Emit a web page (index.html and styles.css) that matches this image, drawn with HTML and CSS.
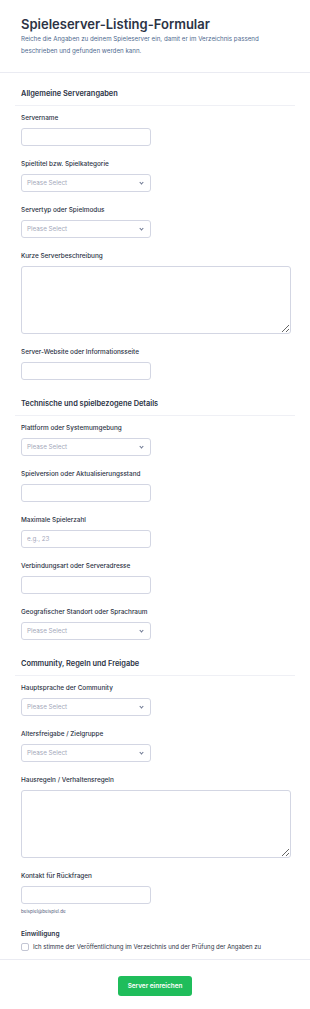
FILE: index.html
```html
<!DOCTYPE html>
<html lang="de">
<head>
  <meta charset="UTF-8">
  <meta name="viewport" content="width=device-width, initial-scale=1.0">
  <title>Spieleserver-Listing-Formular</title>
  <link rel="stylesheet" href="styles.css">
</head>
<body>
  <form class="form">
    <header class="form-header">
      <h1>Spieleserver-Listing-Formular</h1>
      <p>Reiche die Angaben zu deinem Spieleserver ein, damit er im Verzeichnis passend beschrieben und gefunden werden kann.</p>
    </header>

    <section class="section">
      <h2>Allgemeine Serverangaben</h2>
      <div class="field">
        <label>Servername</label>
        <input type="text" class="input">
      </div>
      <div class="field">
        <label>Spieltitel bzw. Spielkategorie</label>
        <div class="select">Please Select</div>
      </div>
      <div class="field">
        <label>Servertyp oder Spielmodus</label>
        <div class="select">Please Select</div>
      </div>
      <div class="field">
        <label>Kurze Serverbeschreibung</label>
        <textarea class="textarea"></textarea>
      </div>
      <div class="field">
        <label>Server-Website oder Informationsseite</label>
        <input type="text" class="input">
      </div>
    </section>

    <section class="section">
      <h2>Technische und spielbezogene Details</h2>
      <div class="field">
        <label>Plattform oder Systemumgebung</label>
        <div class="select">Please Select</div>
      </div>
      <div class="field">
        <label>Spielversion oder Aktualisierungsstand</label>
        <input type="text" class="input">
      </div>
      <div class="field">
        <label>Maximale Spielerzahl</label>
        <input type="text" class="input" placeholder="e.g., 23">
      </div>
      <div class="field">
        <label>Verbindungsart oder Serveradresse</label>
        <input type="text" class="input">
      </div>
      <div class="field">
        <label>Geografischer Standort oder Sprachraum</label>
        <div class="select">Please Select</div>
      </div>
    </section>

    <section class="section">
      <h2>Community, Regeln und Freigabe</h2>
      <div class="field">
        <label>Hauptsprache der Community</label>
        <div class="select">Please Select</div>
      </div>
      <div class="field">
        <label>Altersfreigabe / Zielgruppe</label>
        <div class="select">Please Select</div>
      </div>
      <div class="field">
        <label>Hausregeln / Verhaltensregeln</label>
        <textarea class="textarea"></textarea>
      </div>
      <div class="field">
        <label>Kontakt für Rückfragen</label>
        <input type="text" class="input">
        <span class="hint">beispiel@beispiel.de</span>
      </div>
      <div class="field consent">
        <label class="consent-title">Einwilligung</label>
        <label class="check">
          <span class="box"></span>
          Ich stimme der Veröffentlichung im Verzeichnis und der Prüfung der Angaben zu
        </label>
      </div>
    </section>

    <footer class="form-footer">
      <button type="button" class="submit">Server einreichen</button>
    </footer>
  </form>
</body>
</html>
```

FILE: styles.css
```css
body {
  margin: 0;
  background-color: #fff;
  color: #2c3345;
  font-family: Inter, 'Noto Sans', sans-serif;
}

.form {
  width: 310px;
}

.form-header {
  padding: 16px 21px 15px;
  margin-bottom: 10px;
  border-bottom: 1px solid #eaebf2;
}

.form-header h1 {
  margin: 0;
  font-size: 13px;
  line-height: 17px;
  font-weight: 600;
}

.form-header p {
  margin: 0;
  font-size: 6.2px;
  line-height: 12px;
  color: #4f6a8f;
}

.section {
  padding: 5px 15px 0;
}

.section h2 {
  margin: 0 0 7px;
  padding: 0 6px 5px;
  font-size: 7.4px;
  line-height: 12px;
  font-weight: 600;
  border-bottom: 1px solid #eff0f5;
}

.field {
  padding: 0 6px;
  margin-bottom: 13px;
}

.field label {
  display: block;
  font-size: 6.4px;
  line-height: 10px;
  font-weight: 500;
  margin-bottom: 5px;
}

.input,
.select {
  box-sizing: border-box;
  display: block;
  width: 130px;
  height: 18px;
  margin: 0;
  border: 1px solid #d3d6e3;
  border-radius: 3px;
  background: #fff;
  font-family: inherit;
  font-size: 6.3px;
  padding: 0 5px;
  color: #2c3345;
}

.input::placeholder {
  color: #a4a8ba;
}

.select {
  position: relative;
  line-height: 16px;
  color: #a4a8ba;
}

.select::after {
  content: '';
  position: absolute;
  right: 7px;
  top: 6px;
  width: 2px;
  height: 2px;
  border-right: 1px solid #6b7590;
  border-bottom: 1px solid #6b7590;
  transform: rotate(45deg);
}

.textarea {
  box-sizing: border-box;
  display: block;
  width: 270px;
  height: 68px;
  margin: 0;
  border: 1px solid #d3d6e3;
  border-radius: 3px;
  resize: vertical;
}

.hint {
  display: block;
  margin-top: 4px;
  font-size: 4.6px;
  line-height: 8px;
  color: #57647e;
}

.consent {
  margin-bottom: 7px;
}

.field .consent-title {
  font-size: 6.6px;
  margin-bottom: 3px;
  font-weight: 600;
}

.field .check {
  display: flex;
  align-items: center;
  gap: 4px;
  font-weight: 400;
  font-size: 6px;
  line-height: 10px;
  margin: 0;
}

.box {
  box-sizing: border-box;
  width: 8px;
  height: 8px;
  border: 1px solid #c3c6d4;
  border-radius: 2px;
}

.form-footer {
  border-top: 1px solid #eaebf2;
  padding: 12px 0 16px;
  text-align: center;
}

.submit {
  width: 74px;
  height: 20px;
  border: none;
  border-radius: 3px;
  background-color: #1fbd5b;
  color: #fff;
  font-family: inherit;
  font-size: 6.4px;
  font-weight: 600;
  cursor: pointer;
}
```
